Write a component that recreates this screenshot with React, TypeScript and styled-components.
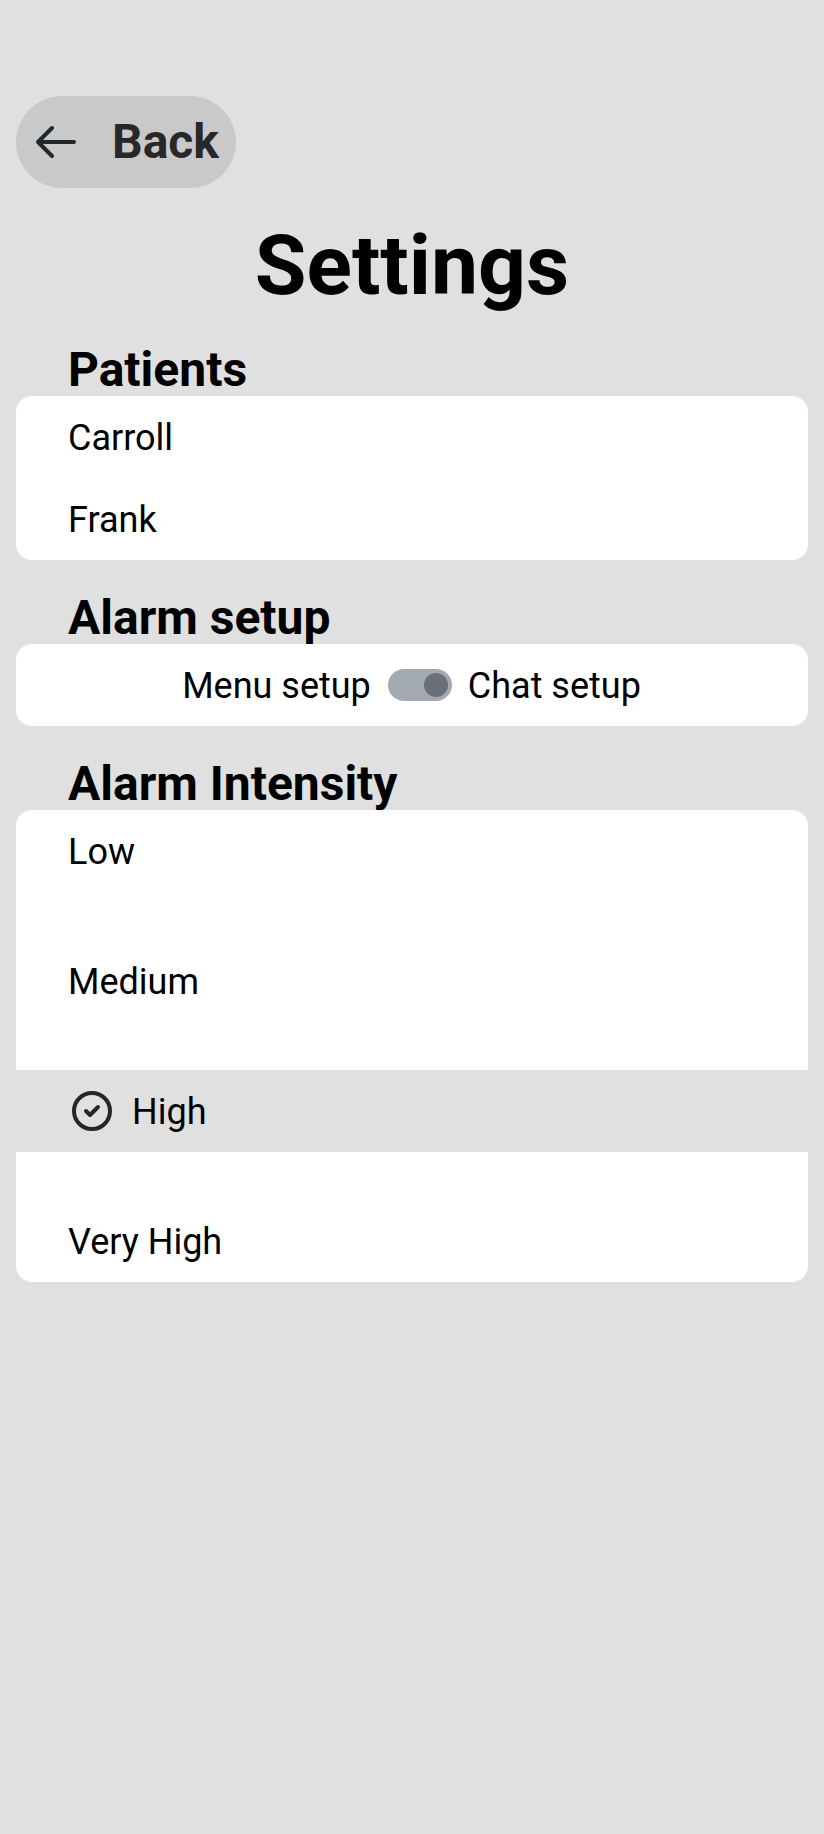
import React, { useState } from "react";
import styled, { createGlobalStyle } from "styled-components";

const GlobalStyle = createGlobalStyle`
  *, *::before, *::after { box-sizing: border-box; }
  body {
    margin: 0;
    background: #e0e0e0;
    color: #000;
    font-family: Roboto, "Liberation Sans", sans-serif;
  }
`;

const Screen = styled.main`
  display: flex;
  flex-direction: column;
  min-height: 100vh;
  padding: 96px 16px 0;
  background: #e0e0e0;
`;

const BackButton = styled.button`
  display: flex;
  align-items: center;
  align-self: flex-start;
  gap: 32px;
  width: 220px;
  height: 92px;
  padding: 0 16px;
  border: 0;
  border-radius: 46px;
  background: #c9c9c9;
  color: #282828;
  font: 700 48px/56px Roboto, "Liberation Sans", sans-serif;
  white-space: nowrap;
`;

const Icon = styled.svg`
  flex: none;
  width: 48px;
  height: 48px;
  fill: none;
  stroke: #21272a;
  stroke-width: 4;
  stroke-linecap: round;
  stroke-linejoin: round;
`;

const Title = styled.h1`
  margin: 29px 0 0;
  text-align: center;
  font-size: 84px;
  line-height: 98px;
  font-weight: 700;
`;

const Section = styled.section`
  margin-top: 25px;

  & + & {
    margin-top: 28px;
  }
`;

const SectionTitle = styled.h2`
  height: 56px;
  margin: 0;
  padding: 2px 0 0 52px;
  overflow: hidden;
  font-size: 48px;
  line-height: 56px;
  font-weight: 700;
`;

const Card = styled.div<{ $gap?: number }>`
  display: flex;
  flex-direction: column;
  gap: ${({ $gap = 0 }) => $gap}px;
  overflow: hidden;
  border-radius: 16px;
  background: #fff;
`;

const Row = styled.div<{ $selected?: boolean }>`
  display: flex;
  align-items: center;
  gap: 16px;
  height: 82px;
  padding: 0 52px;
  background: ${({ $selected }) => ($selected ? "#e0e0e0" : "transparent")};
  font-size: 36px;
  line-height: 42px;
`;

const SwitchRow = styled(Row)`
  justify-content: center;
`;

const Label = styled.span`
  padding-top: 2px;
`;

const LeadingLabel = styled(Label)`
  margin: 0 1px 0 -1px;
`;

const Switch = styled.button<{ $on: boolean }>`
  display: flex;
  justify-content: ${({ $on }) => ($on ? "flex-end" : "flex-start")};
  width: 64px;
  height: 32px;
  padding: 4px;
  border: 0;
  border-radius: 16px;
  background: #a2a9b0;
`;

const Knob = styled.span`
  width: 24px;
  height: 24px;
  border-radius: 50%;
  background: #697077;
`;

const patients = ["Carroll", "Frank"];
const intensities = ["Low", "Medium", "High", "Very High"];

export default function App() {
  const [chat, setChat] = useState(true);
  const [intensity, setIntensity] = useState("High");

  return (
    <>
      <GlobalStyle />
      <Screen>
        <BackButton>
          <Icon viewBox="0 0 48 48">
            <path d="M42 24H6M20 10L6 24l14 14" />
          </Icon>
          Back
        </BackButton>
        <Title>Settings</Title>

        <Section>
          <SectionTitle>Patients</SectionTitle>
          <Card>
            {patients.map((name) => (
              <Row key={name}>
                <Label>{name}</Label>
              </Row>
            ))}
          </Card>
        </Section>

        <Section>
          <SectionTitle>Alarm setup</SectionTitle>
          <Card>
            <SwitchRow>
              <LeadingLabel>Menu setup</LeadingLabel>
              <Switch
                $on={chat}
                role="switch"
                aria-checked={chat}
                aria-label="Chat setup"
                onClick={() => setChat(!chat)}
              >
                <Knob />
              </Switch>
              <Label>Chat setup</Label>
            </SwitchRow>
          </Card>
        </Section>

        <Section>
          <SectionTitle>Alarm Intensity</SectionTitle>
          <Card $gap={48}>
            {intensities.map((level) => (
              <Row
                key={level}
                $selected={level === intensity}
                onClick={() => setIntensity(level)}
              >
                {level === intensity && (
                  <Icon viewBox="0 0 48 48">
                    <circle cx="24" cy="24" r="18" />
                    <path d="M18 24l4 4 8-8" />
                  </Icon>
                )}
                <Label>{level}</Label>
              </Row>
            ))}
          </Card>
        </Section>
      </Screen>
    </>
  );
}
